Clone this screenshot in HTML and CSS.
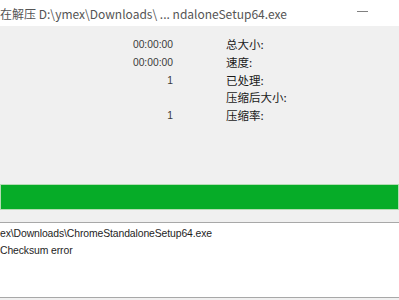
FILE: index.html
```html
<!DOCTYPE html>
<html lang="zh-CN">
<head>
<meta charset="utf-8">
<title>正在解压</title>
<link rel="stylesheet" href="styles.css">
</head>
<body>
<div class="window">
  <div class="titlebar">
    <span class="title">在解压 D:\ymex\Downloads\ ... ndaloneSetup64.exe</span>
    <span class="min-btn"><span class="min-line"></span></span>
  </div>
  <div class="stats">
    <span class="val">00:00:00</span><span class="lbl">总大小:</span>
    <span class="val">00:00:00</span><span class="lbl">速度:</span>
    <span class="val">1</span><span class="lbl">已处理:</span>
    <span class="val"></span><span class="lbl">压缩后大小:</span>
    <span class="val">1</span><span class="lbl">压缩率:</span>
  </div>
  <div class="progress"><div class="fill"></div></div>
  <div class="log">
    <div class="line">ex\Downloads\ChromeStandaloneSetup64.exe</div>
    <div class="line">Checksum error</div>
  </div>
</div>
</body>
</html>
```
FILE: styles.css
```css
html, body {
  margin: 0;
  padding: 0;
  background: #f0f0f0;
}
.window {
  width: 399px;
  height: 300px;
  overflow: hidden;
  display: flex;
  flex-direction: column;
}
.titlebar {
  height: 26px;
  background: #ffffff;
  display: flex;
  align-items: center;
  flex-shrink: 0;
}
.title {
  font-family: "Noto Sans CJK SC", "Noto Sans", sans-serif;
  font-size: 12px;
  color: #555555;
  white-space: nowrap;
  flex: 1;
}
.min-btn {
  width: 46px;
  height: 26px;
  box-sizing: border-box;
  padding-top: 11px;
  display: flex;
  align-items: flex-start;
  justify-content: center;
  margin-right: 14px;
}
.min-line {
  display: block;
  width: 11px;
  height: 1px;
  background: #808080;
}
.stats {
  display: grid;
  grid-template-columns: 173px auto;
  column-gap: 53px;
  padding-top: 10px;
  height: 158px;
  box-sizing: border-box;
  align-content: start;
  flex-shrink: 0;
}
.val {
  text-align: right;
  font-family: "Liberation Sans", Arial, sans-serif;
  font-size: 10.3px;
  color: #3a3a3a;
  line-height: 17.75px;
  height: 17.75px;
}
.lbl {
  font-family: "Noto Sans CJK SC", sans-serif;
  font-size: 11.5px;
  color: #1a1a1a;
  line-height: 17.75px;
  height: 17.75px;
}
.progress {
  height: 26px;
  box-sizing: border-box;
  border: 1px solid #b4dcb4;
  background: #06b025;
  flex-shrink: 0;
}
.fill {
  height: 100%;
  background: #06ac28;
}
.log {
  margin-top: 12px;
  height: 76px;
  box-sizing: border-box;
  background: #ffffff;
  border-top: 1px solid #a8a8a8;
  border-bottom: 1px solid #a8a8a8;
  padding-top: 2px;
  flex-shrink: 0;
}
.line {
  font-family: "Liberation Sans", Arial, sans-serif;
  font-size: 10.4px;
  letter-spacing: -0.1px;
  color: #1e1e1e;
  line-height: 17px;
  white-space: nowrap;
}
```
